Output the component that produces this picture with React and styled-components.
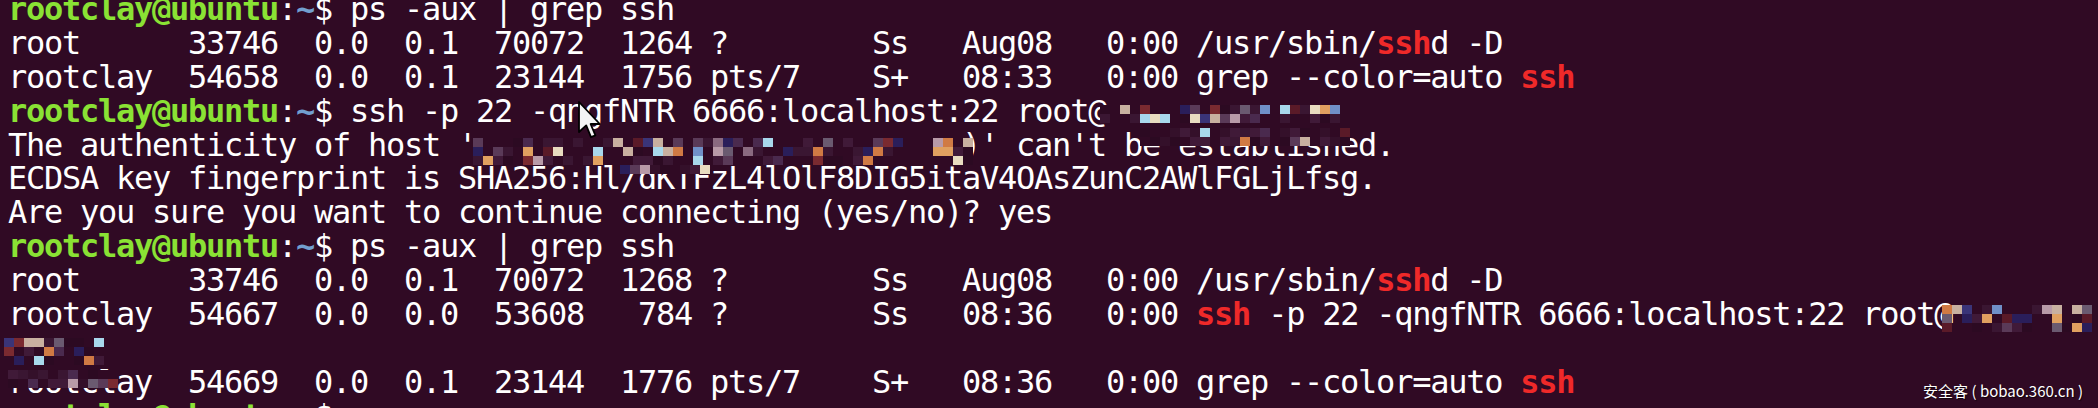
import React from "react";
import styled, { createGlobalStyle } from "styled-components";

const Global = createGlobalStyle`
html, body {
  margin: 0;
  padding: 0;
  background: #300a24;
}
`

const Screen = styled.div`
position: relative;
width: 2098px;
height: 408px;
overflow: hidden;
background: #300a24;
`

const Lines = styled.div`
margin-top: -7px;
padding-left: 8px;
font-family: "DejaVu Sans Mono", "Liberation Mono", monospace;
font-size: 32px;
letter-spacing: -1.264px;
color: #ffffff;
`

const Line = styled.div`
height: 33.9px;
line-height: 33.9px;
white-space: pre;
`

const User = styled.span`
color: #8ae234;
font-weight: bold;
`

const Dir = styled.span`
color: #729fcf;
font-weight: bold;
`

const Hit = styled.span`
color: #ef2929;
font-weight: bold;
`

const Patch = styled.svg`
position: absolute;
left: ${p => p.$x}px;
top: ${p => p.$y}px;
display: block;
`

const Pointer = styled.svg`
position: absolute;
left: 577px;
top: 100px;
`

const Mark = styled.div`
position: absolute;
right: 15px;
bottom: 8px;
font-family: "Noto Sans CJK SC", "Noto Sans", sans-serif;
font-size: 15px;
line-height: 18px;
color: #ffffff;
text-shadow: 1px 1px 1px rgba(0, 0, 0, 0.7);
white-space: pre;
`

const bright = ["#e8dcc0", "#a8d8ec", "#7090c8", "#d07a44", "#e0a060", "#b89aa8", "#8a6a80", "#2a1e5a", "#3a3478", "#7a2a30", "#c8b0a0", "#5a1a28", "#6a5a70", "#4a2a4e", "#5a3a58", "#2a1e5a"];
const dark = ["#300a24", "#34102a", "#3a1632", "#2c0a22", "#401a38", "#300a24"];

function rand(seed) {
    let s = seed;
    return () => {
        s = (s * 1103515245 + 12345) % 2147483648;
        return s / 2147483648;
    };
}

function Mosaic({ x, y, cols, rows, cw = 10, ch = 9, seed, density = 0.4, cover }) {
    const r = rand(seed);
    const cells = [];
    for (let j = 0; j < rows; j++) {
        for (let i = 0; i < cols; i++) {
            const v = r();
            const pick = r();
            let fill = null;
            if (v < density) fill = bright[Math.floor(pick * bright.length)];
            else if (cover) fill = dark[Math.floor(pick * dark.length)];
            else if (v < density + 0.25) fill = dark[2 + Math.floor(pick * 3)];
            if (fill) cells.push(<rect key={j + "-" + i} x={i * cw} y={j * ch} width={cw} height={ch} fill={fill} />);
        }
    }
    return (
        <Patch $x={x} $y={y} width={cols * cw} height={rows * ch} shapeRendering="crispEdges">
            {cells}
        </Patch>
    );
}

function Prompt() {
    return (
        <>
            <User>rootclay@ubuntu</User>{":"}<Dir>~</Dir>{"$ "}
        </>
    );
}

export default function App() {
    return (
        <Screen>
            <Global />
            <Lines>
                <Line><Prompt />{"ps -aux | grep ssh"}</Line>
                <Line>{"root      33746  0.0  0.1  70072  1264 ?        Ss   Aug08   0:00 /usr/sbin/"}<Hit>ssh</Hit>{"d -D"}</Line>
                <Line>{"rootclay  54658  0.0  0.1  23144  1756 pts/7    S+   08:33   0:00 grep --color=auto "}<Hit>ssh</Hit></Line>
                <Line><Prompt />{"ssh -p 22 -qngfNTR 6666:localhost:22 root@"}</Line>
                <Line>{"The authenticity of host '                           )' can't be established."}</Line>
                <Line>{"ECDSA key fingerprint is SHA256:Hl/dKTFzL4lOlF8DIG5itaV4OAsZunC2AWlFGLjLfsg."}</Line>
                <Line>{"Are you sure you want to continue connecting (yes/no)? yes"}</Line>
                <Line><Prompt />{"ps -aux | grep ssh"}</Line>
                <Line>{"root      33746  0.0  0.1  70072  1268 ?        Ss   Aug08   0:00 /usr/sbin/"}<Hit>ssh</Hit>{"d -D"}</Line>
                <Line>{"rootclay  54667  0.0  0.0  53608   784 ?        Ss   08:36   0:00 "}<Hit>ssh</Hit>{" -p 22 -qngfNTR 6666:localhost:22 root@"}</Line>
                <Line>{" "}</Line>
                <Line>{"rootclay  54669  0.0  0.1  23144  1776 pts/7    S+   08:36   0:00 grep --color=auto "}<Hit>ssh</Hit></Line>
                <Line><Prompt /></Line>
            </Lines>

            {/* pixelated addresses */}
            <Mosaic x={1100} y={105} cols={24} rows={2} seed={11} density={0.45} />
            <Mosaic x={1140} y={128} cols={21} rows={2} seed={23} density={0.14} cover />
            <Mosaic x={473} y={138} cols={50} rows={3} seed={37} density={0.38} />
            <Mosaic x={620} y={165} cols={9} rows={1} seed={41} density={0.3} cover />
            <Mosaic x={1942} y={305} cols={16} rows={3} seed={53} density={0.42} />
            <Mosaic x={4} y={338} cols={10} rows={3} seed={67} density={0.45} />
            <Mosaic x={8} y={370} cols={11} rows={2} seed={79} density={0.4} cover />

            <Pointer width="26" height="40" viewBox="0 0 13 20">
                <path d="M1 1 L1 16 L4.6 12.7 L7 18.6 L9.2 17.7 L6.8 12 L11.4 12 Z" fill="#f4f4f4" stroke="#000" strokeWidth="0.9" strokeLinejoin="round" />
            </Pointer>

            <Mark>{"安全客 ( bobao.360.cn )"}</Mark>
        </Screen>
    );
}
